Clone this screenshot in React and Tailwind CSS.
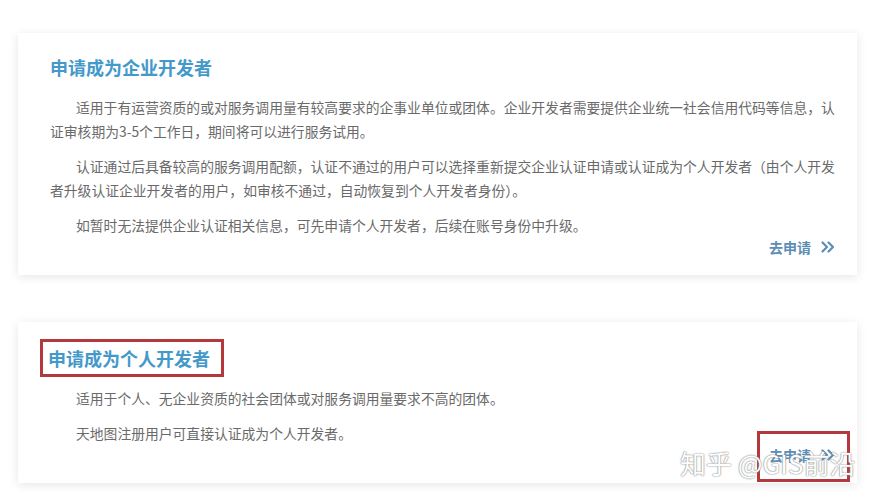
import React from "react";

const font = { fontFamily: '"Noto Sans CJK SC", "Noto Sans", sans-serif' };

function GoLink() {
  return (
    <div className="flex justify-end">
      <a className="flex items-center gap-[10px] h-[20px] text-[14px] font-bold text-[#5b8db5] leading-[20px]">
        <span>去申请</span>
        <svg width="14" height="12" viewBox="0 0 14 12" fill="none" stroke="#5b8db5" strokeWidth="2.2" strokeLinecap="round" strokeLinejoin="round">
          <path d="M1.5 1.5 L6 6 L1.5 10.5" />
          <path d="M7.5 1.5 L12 6 L7.5 10.5" />
        </svg>
      </a>
    </div>
  );
}

export default function App() {
  return (
    <div className="relative w-[886px] h-[500px] bg-white overflow-hidden" style={font}>
      <div className="flex flex-col gap-[47px] pt-[33px] pl-[18px] w-[857px]">
        {/* Card 1 */}
        <div className="bg-white shadow-[0_2px_10px_rgba(0,0,0,0.10)] pt-[20px] pb-[18px] pl-[32px] pr-[22px]">
          <h2 className="text-[18px] leading-[28px] font-bold text-[#4399ca]">申请成为企业开发者</h2>
          <div className="mt-[14px] flex flex-col gap-[11px] text-[13.8px] leading-[24px] text-[#6a6a6a] whitespace-nowrap">
            <p>
              <span className="pl-[26px]">适用于有运营资质的或对服务调用量有较高要求的企事业单位或团体。企业开发者需要提供企业统一社会信用代码等信息，认</span>
              <br />
              证审核期为3-5个工作日，期间将可以进行服务试用。
            </p>
            <p>
              <span className="pl-[26px]">认证通过后具备较高的服务调用配额，认证不通过的用户可以选择重新提交企业认证申请或认证成为个人开发者（由个人开发</span>
              <br />
              者升级认证企业开发者的用户，如审核不通过，自动恢复到个人开发者身份）。
            </p>
            <p>
              <span className="pl-[26px]">如暂时无法提供企业认证相关信息，可先申请个人开发者，后续在账号身份中升级。</span>
            </p>
          </div>
          <GoLink />
        </div>

        {/* Card 2 */}
        <div className="bg-white shadow-[0_2px_10px_rgba(0,0,0,0.10)] pt-[22px] pb-[18px] pl-[30px] pr-[22px]">
          <div className="relative inline-block">
            <h2 className="text-[18px] leading-[28px] font-bold text-[#4399ca]">申请成为个人开发者</h2>
            <div className="absolute left-[-8px] right-[-14px] top-[-5px] bottom-[-5px] border-[3px] border-[#b3393d]" />
          </div>
          <div className="mt-[14px] flex flex-col gap-[11px] text-[13.8px] leading-[24px] text-[#6a6a6a] whitespace-nowrap pl-[28px]">
            <p>适用于个人、无企业资质的社会团体或对服务调用量要求不高的团体。</p>
            <p>天地图注册用户可直接认证成为个人开发者。</p>
          </div>
          <div className="relative">
            <GoLink />
          </div>
        </div>
      </div>

      {/* red box around second link */}
      <div className="absolute left-[757px] top-[431px] w-[93px] h-[51px] border-[3px] border-[#b3393d]" />

      {/* watermark */}
      <div className="absolute left-[680px] top-[446px] text-[26px] leading-[34px] text-white [text-shadow:0_0_1px_#777,0_0_2px_#999]" style={font}>
        知乎 @GIS前沿
      </div>
    </div>
  );
}
